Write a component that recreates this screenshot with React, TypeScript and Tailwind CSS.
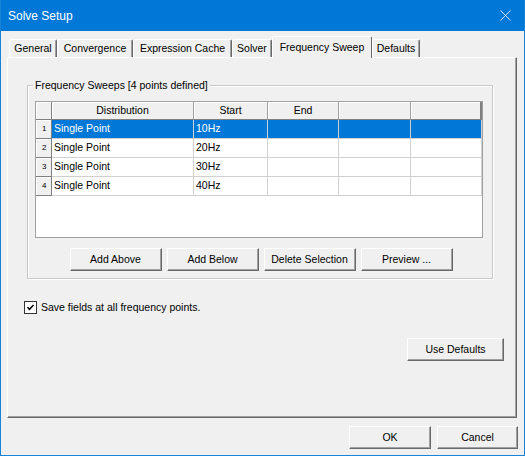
import { X } from "lucide-react"

const tabs = [
  { label: "General", w: "w-[48px]" },
  { label: "Convergence", w: "w-[76px]" },
  { label: "Expression Cache", w: "w-[99px]" },
  { label: "Solver", w: "w-[40px]" },
  { label: "Frequency Sweep", w: "w-[100px]", active: true },
  { label: "Defaults", w: "w-[48px]" },
]

const rows = ["10Hz", "20Hz", "30Hz", "40Hz"]

const cols = "grid grid-cols-[16px_142px_74px_71px_72px_71px]"

function Btn({ label, w }: { label: string; w: string }) {
  return (
    <button
      className={`${w} h-[23px] bg-[#f0f0f0] border-t border-l border-white border-r border-b border-r-[#696969] border-b-[#696969] shadow-[inset_-1px_-1px_0_#a0a0a0] text-[10.5px] text-black`}
    >
      {label}
    </button>
  )
}

export default function App() {
  return (
    <div
      className="w-[525px] h-[456px] flex flex-col bg-[#f0f0f0] border-x border-b border-[#1883d7] text-black"
      style={{ fontFamily: '"Liberation Sans", Arial, sans-serif' }}
    >
      {/* title bar */}
      <div className="h-[31px] shrink-0 bg-[#0078d7] flex items-center justify-between pl-[7px] pr-[9px]">
        <span className="text-white text-[12px]">Solve Setup</span>
        <X className="w-[19px] h-[19px] text-white" strokeWidth={1} />
      </div>

      <div className="flex-1 flex flex-col pl-[6px] pt-[5px]">
        {/* tabs */}
        <div className="flex items-end h-[21px] pl-[2px] text-[10.5px]">
          {tabs.map((t) =>
            t.active ? (
              <div
                key={t.label}
                className={`${t.w} h-[22px] -mb-px relative z-10 bg-[#f0f0f0] border-t border-l border-white border-r border-r-[#696969] rounded-t-[2px] flex items-start justify-center pt-[3px]`}
              >
                {t.label}
              </div>
            ) : (
              <div
                key={t.label}
                className={`${t.w} h-[18px] border-t border-l border-white border-r border-r-[#696969] shadow-[inset_-1px_0_0_#a0a0a0] rounded-t-[2px] flex items-center justify-center`}
              >
                {t.label}
              </div>
            )
          )}
        </div>

        {/* tab panel */}
        <div className="w-[510px] h-[361px] flex flex-col border-t border-l border-white border-r border-b border-r-[#696969] border-b-[#696969] shadow-[inset_-1px_-1px_0_#a0a0a0] text-[10.5px]">
          {/* group box */}
          <div className="relative ml-[19px] mt-[27px] w-[466px] h-[194px] border border-[#c8c8c8] shadow-[inset_1px_1px_0_#fff,1px_1px_0_#fff] flex flex-col">
            <span className="absolute left-[5px] -top-[7px] px-[2px] bg-[#f0f0f0] leading-[12px]">
              Frequency Sweeps [4 points defined]
            </span>

            {/* data grid */}
            <div className="ml-[7px] mt-[15px] w-[448px] h-[137px] border border-[#a0a0a0] bg-white flex flex-col">
              <div className={`${cols} h-[18px]`}>
                <div className="bg-[#f0f0f0] border-r border-b border-[#808080] shadow-[inset_1px_1px_0_#fff]" />
                {["Distribution", "Start", "End", "", ""].map((h, i) => (
                  <div
                    key={i}
                    className={`bg-[#f0f0f0] border-b border-[#808080] shadow-[inset_1px_1px_0_#fff] flex items-center justify-center ${
                      i === 4 ? "border-r-2 border-r-[#808080]" : "border-r border-r-[#a0a0a0]"
                    }`}
                  >
                    {h}
                  </div>
                ))}
              </div>
              {rows.map((r, i) => {
                const sel = i === 0
                const cell = sel
                  ? "bg-[#0078d7] text-white border-r border-b border-[#d0d0d0]"
                  : "bg-white border-r border-b border-[#d0d0d0]"
                return (
                  <div key={r} className={`${cols} h-[19px]`}>
                    <div className="bg-[#f0f0f0] border-r border-b border-[#808080] shadow-[inset_1px_1px_0_#fff] text-[8px] pl-[6px] flex items-center">
                      {i + 1}
                    </div>
                    <div className={`${cell} pl-[2px] flex items-center`}>Single Point</div>
                    <div className={`${cell} pl-[2px] flex items-center`}>{r}</div>
                    <div className={cell} />
                    <div className={cell} />
                    <div className={cell} />
                  </div>
                )
              })}
            </div>

            {/* grid buttons */}
            <div className="mt-[10px] flex justify-center gap-[5px] pl-[2px]">
              <Btn label="Add Above" w="w-[92px]" />
              <Btn label="Add Below" w="w-[92px]" />
              <Btn label="Delete Selection" w="w-[92px]" />
              <Btn label="Preview ..." w="w-[92px]" />
            </div>
          </div>

          {/* checkbox */}
          <label className="ml-[16px] mt-[22px] flex items-center gap-[4px] h-[13px]">
            <span className="w-[13px] h-[13px] bg-white border border-[#333] flex items-center justify-center">
              <svg width="9" height="9" viewBox="0 0 9 9">
                <path d="M1.5 4.2 L3.5 6.3 L7.5 2" fill="none" stroke="#000" strokeWidth="1.5" />
              </svg>
            </span>
            <span>Save fields at all frequency points.</span>
          </label>

          <div className="mt-[24px] flex justify-end pr-[12px]">
            <Btn label="Use Defaults" w="w-[97px]" />
          </div>
        </div>

        {/* dialog buttons */}
        <div className="mt-[8px] flex justify-end gap-[6px] pr-[6px] text-[10.5px]">
          <Btn label="OK" w="w-[82px]" />
          <Btn label="Cancel" w="w-[81px]" />
        </div>
      </div>
    </div>
  )
}
